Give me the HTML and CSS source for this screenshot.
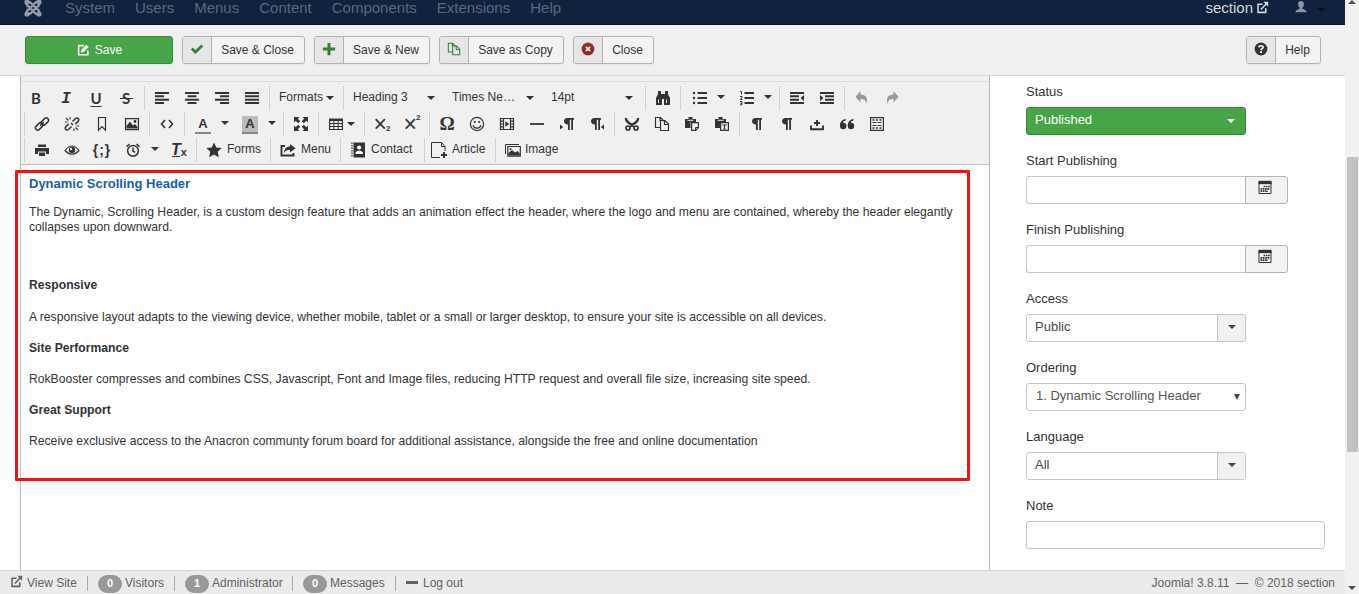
FILE: index.html
```html
<!DOCTYPE html>
<html lang="en">
<head>
<meta charset="utf-8">
<title>Edit module</title>
<link rel="stylesheet" href="styles.css">
</head>
<body>
<svg class="sprite" aria-hidden="true">
  <symbol id="joomla" viewBox="0 0 18 18"><g fill="none" stroke="currentColor" stroke-width="2.300"><path d="M3 3.500Q5.500 2 7.500 4.500L13.500 10.800M15 3.500Q12.500 2 10.500 4.500L4.500 10.800M3 14.500Q5.500 16 7.500 13.500L13.500 7.200M15 14.500Q12.500 16 10.500 13.500L4.500 7.200M3 3.500Q2 6 4.500 7.800M15 3.500Q16 6 13.500 7.800M3 14.500Q2 12 4.500 10.200M15 14.500Q16 12 13.500 10.200"/></g><g fill="currentColor"><circle cx="3" cy="3" r="2.600"/><circle cx="15" cy="3" r="2.600"/><circle cx="3" cy="15" r="2.600"/><circle cx="15" cy="15" r="2.600"/></g></symbol>
  <symbol id="edit" viewBox="0 0 16 16"><path d="M9 3H3v10.500h10.500V8.500" fill="none" stroke="currentColor" stroke-width="1.800"/><path d="M5.500 11l.8-3.200L12 2l2.500 2.500-5.800 5.700z" fill="currentColor"/></symbol>
  <symbol id="check" viewBox="0 0 16 16"><path d="M2 7.500l4.200 4L14 4" fill="none" stroke="currentColor" stroke-width="3.200"/></symbol>
  <symbol id="plus" viewBox="0 0 16 16"><path d="M8 1v14M1 8h14" stroke="currentColor" stroke-width="3.400"/></symbol>
  <symbol id="copy" viewBox="0 0 16 16"><path d="M6.500 11.500h-5v-10h5l2.500 2.500v1.500M6 1.500v3H9M6.500 4.500h4.500l3.500 3.500v6.500h-8zM10.500 4.500v4h4" fill="none" stroke="currentColor" stroke-width="1.200"/></symbol>
  <symbol id="cancel" viewBox="0 0 16 16"><circle cx="8" cy="8" r="7.300" fill="currentColor"/><path d="M5.500 5.500l5 5M10.500 5.500l-5 5" stroke="#fff" stroke-width="1.900"/></symbol>
  <symbol id="question" viewBox="0 0 16 16"><circle cx="8" cy="8" r="7.300" fill="currentColor"/><path d="M5.600 6.200C5.800 3.600 10.500 3.700 10.400 6.200 10.300 7.700 8.100 7.700 8.100 9.300" fill="none" stroke="#fff" stroke-width="1.800"/><path d="M7 10.700h2.200v2H7z" fill="#fff"/></symbol>
  <symbol id="external" viewBox="0 0 16 16"><path d="M8 4H2.500v10H12V9M6 10.500l7-7.500" fill="none" stroke="currentColor" stroke-width="1.900"/><path d="M9 1h6v6z" fill="currentColor"/></symbol>
  <symbol id="user" viewBox="0 0 16 16"><path d="M8 1c2.400 0 3.500 1.700 3.300 4C11.200 7 10.300 8 9.600 8.600V10c2 .6 4.400 1.500 4.900 4H1.500C2 11.500 4.400 10.600 6.400 10V8.600C5.700 8 4.800 7 4.700 5 4.500 2.700 5.600 1 8 1z" fill="currentColor"/></symbol>
  <symbol id="left" viewBox="0 0 16 16"><path d="M1 3h14M1 6.300h9M1 9.700h14M1 13h9" stroke="currentColor" stroke-width="1.900"/></symbol>
  <symbol id="center" viewBox="0 0 16 16"><path d="M1 3h14M3.500 6.300h9M1 9.700h14M3.500 13h9" stroke="currentColor" stroke-width="1.900"/></symbol>
  <symbol id="right" viewBox="0 0 16 16"><path d="M1 3h14M6 6.300h9M1 9.700h14M6 13h9" stroke="currentColor" stroke-width="1.900"/></symbol>
  <symbol id="justify" viewBox="0 0 16 16"><path d="M1 3h14M1 6.300h14M1 9.700h14M1 13h14" stroke="currentColor" stroke-width="1.900"/></symbol>
  <symbol id="find" viewBox="0 0 16 16"><path d="M3 1h3v3h4V1h3v3l2 4v7H9V9H7v6H1V8l2-4z" fill="currentColor"/><path d="M3 9.500h1V13H3zM11 9.500h1V13h-1z" fill="#eee"/></symbol>
  <symbol id="bullets" viewBox="0 0 16 16"><path d="M5.500 3H15M5.500 8H15M5.500 13H15" stroke="currentColor" stroke-width="1.800"/><circle cx="2" cy="3" r="1.200" fill="currentColor"/><circle cx="2" cy="8" r="1.200" fill="currentColor"/><circle cx="2" cy="13" r="1.200" fill="currentColor"/></symbol>
  <symbol id="numbers" viewBox="0 0 16 16"><path d="M5.500 3H15M5.500 8H15M5.500 13H15" stroke="currentColor" stroke-width="1.800"/><path d="M1 1.500h1.500v3M1 6.500h2V8L1.200 9.500H3.300M1 11.500h2v3.300H1M1.500 13.200H3" fill="none" stroke="currentColor"/></symbol>
  <symbol id="outdent" viewBox="0 0 16 16"><path d="M1 3h14M1 6.300h9M1 9.700h9M1 13h14" stroke="currentColor" stroke-width="1.900"/><path d="M15 5v6l-3.500-3z" fill="currentColor"/></symbol>
  <symbol id="indent" viewBox="0 0 16 16"><path d="M1 3h14M6 6.300h9M6 9.700h9M1 13h14" stroke="currentColor" stroke-width="1.900"/><path d="M1 5v6l3.500-3z" fill="currentColor"/></symbol>
  <symbol id="undo" viewBox="0 0 16 16"><path d="M6.500 1v3.500C12 4.500 14.500 8 12 14.500c0-4.500-1.500-5.500-5.500-5.500v3.500L1.500 6.800z" fill="currentColor"/></symbol>
  <symbol id="redo" viewBox="0 0 16 16"><path d="M9.500 1v3.500C4 4.500 1.500 8 4 14.500c0-4.500 1.500-5.500 5.500-5.500v3.500l5-5.700z" fill="currentColor"/></symbol>
  <symbol id="link" viewBox="0 0 16 16"><g fill="none" stroke="currentColor" stroke-width="1.500"><rect x="6.600" y="3.300" width="8.500" height="4.600" rx="2.300" transform="rotate(-45 10.850 5.600)"/><rect x=".9" y="8.100" width="8.500" height="4.600" rx="2.300" transform="rotate(-45 5.150 10.400)"/><path d="M6.200 9.800l3.600-3.600"/></g></symbol>
  <symbol id="unlink" viewBox="0 0 16 16"><g fill="none" stroke="currentColor" stroke-width="1.500"><path d="M8.500 5.500l3-3c2-1.500 4.200.7 2.700 2.700l-3 3M7.500 10.500l-3 3c-2 1.500-4.200-.7-2.700-2.700l3-3M7 7l2 2"/></g><path d="M2 2l2.500 2.500M6 1v2.500M1 6h2.500M11.500 11.500L14 14M10 12.500V15M12.500 10H15" stroke="currentColor" stroke-width="1.100"/></symbol>
  <symbol id="bookmark" viewBox="0 0 16 16"><path d="M4.500 1.500h7v12.700L8 10.500l-3.500 3.700z" fill="none" stroke="currentColor" stroke-width="1.200"/></symbol>
  <symbol id="picture" viewBox="0 0 16 16"><path d="M1.600 2.600h12.800v11H1.600z" fill="none" stroke="currentColor" stroke-width="1.300"/><path d="M2.500 12.500V10L6 5.500l3 4L11 8l2.500 3v1.500z" fill="currentColor"/><circle cx="11" cy="5.500" r="1.400" fill="currentColor"/></symbol>
  <symbol id="code" viewBox="0 0 16 16"><path d="M6 4L2.500 8 6 12M10 4l3.500 4L10 12" fill="none" stroke="currentColor" stroke-width="1.600"/></symbol>
  <symbol id="fullscreen" viewBox="0 0 16 16"><path d="M1 1h5.500L4.800 2.700l2.500 2.500-2.100 2.100-2.500-2.500L1 6.500zM15 1H9.500l1.700 1.700-2.500 2.500 2.100 2.100 2.500-2.500L15 6.500zM1 15h5.500l-1.700-1.700 2.500-2.500-2.100-2.100-2.500 2.500L1 9.500zM15 15H9.500l1.700-1.700-2.500-2.500 2.100-2.100 2.500 2.500L15 9.500z" fill="currentColor"/></symbol>
  <symbol id="table" viewBox="0 0 16 16"><path d="M1 2.500h14v11.500H1z" fill="currentColor"/><path d="M2.200 5h3.200v2H2.200zM6.400 5h3.200v2H6.400zM10.600 5h3.200v2h-3.200zM2.200 8h3.200v2H2.200zM6.400 8h3.200v2H6.400zM10.600 8h3.200v2h-3.200zM2.200 11h3.200v2H2.200zM6.400 11h3.200v2H6.400zM10.600 11h3.200v2h-3.200z" fill="#f0f0f0"/></symbol>
  <symbol id="smile" viewBox="0 0 16 16"><circle cx="8" cy="8" r="6.600" fill="none" stroke="currentColor" stroke-width="1.200"/><circle cx="5.800" cy="6" r="1.100" fill="currentColor"/><circle cx="10.200" cy="6" r="1.100" fill="currentColor"/><path d="M4 9.200c1.600 4 6.400 4 8 0" fill="none" stroke="currentColor" stroke-width="1.200"/></symbol>
  <symbol id="media" viewBox="0 0 16 16"><path d="M1.500 2.500h13v11h-13zM4.500 2.500v11M11.500 2.500v11M1.500 5.200h3M1.500 8h3M1.500 10.800h3M11.500 5.200h3M11.500 8h3M11.500 10.800h3" fill="none" stroke="currentColor" stroke-width="1.200"/><path d="M6.300 5.200l4 2.800-4 2.800z" fill="currentColor"/></symbol>
  <symbol id="hr" viewBox="0 0 16 16"><path d="M1 8h14" stroke="currentColor" stroke-width="1.800"/></symbol>
  <symbol id="para" viewBox="0 0 16 16"><path d="M6.500 2H13v1.700h-1V14h-1.800V3.700H8.800V14H7V8.500C1.700 8.500 1.900 2 6.500 2z" fill="currentColor"/></symbol>
  <symbol id="ltr" viewBox="0 0 16 16"><path d="M8.500 2H15v1.700h-1V14h-1.800V3.700h-1.400V14H9V8.500C3.700 8.500 3.900 2 8.500 2zM1 8.500v5L4.200 11z" fill="currentColor"/></symbol>
  <symbol id="rtl" viewBox="0 0 16 16"><path d="M5.500 2H12v1.700h-1V14H9.200V3.700H7.800V14H6V8.500C.7 8.500.9 2 5.500 2zM15 8.500v5L11.800 11z" fill="currentColor"/></symbol>
  <symbol id="cut" viewBox="0 0 16 16"><path d="M2 2c-.5 2 1 3.500 3 5l6 4M14 2c.5 2-1 3.500-3 5l-6 4" fill="none" stroke="currentColor" stroke-width="2.300"/><g fill="none" stroke="currentColor" stroke-width="1.700"><circle cx="4" cy="12" r="2"/><circle cx="12" cy="12" r="2"/></g></symbol>
  <symbol id="paste" viewBox="0 0 16 16"><path d="M1 3h3.500V1h4v2H12v3H6.500v6H1z" fill="currentColor"/><path d="M3.500 4.300h6" stroke="#eee"/><path d="M7.600 6.600h6.800v5l-2.700 2.800H7.600z" fill="#f0f0f0" stroke="currentColor" stroke-width="1.200"/><path d="M11.500 14.500v-3h3" fill="none" stroke="currentColor"/></symbol>
  <symbol id="pastetext" viewBox="0 0 16 16"><path d="M1 3h3.500V1h4v2H12v3H6.500v6H1z" fill="currentColor"/><path d="M3.500 4.300h6" stroke="#eee"/><path d="M6.600 6.600h7.800v7.800H6.600z" fill="#f0f0f0" stroke="currentColor" stroke-width="1.200"/><path d="M8.200 9h4.600M10.500 9v4M9.300 13h2.400" fill="none" stroke="currentColor" stroke-width="1.200"/></symbol>
  <symbol id="insert" viewBox="0 0 16 16"><path d="M2 9.500v3.700h12V9.500" fill="none" stroke="currentColor" stroke-width="1.900"/><path d="M8 4v6M5 7h6" stroke="currentColor" stroke-width="1.900"/></symbol>
  <symbol id="quote" viewBox="0 0 16 16"><g fill="currentColor"><circle cx="4.200" cy="10" r="3.200"/><circle cx="12" cy="10" r="3.200"/><path d="M1 10C.8 6 3 3.500 6.700 3v1.500C4.500 5 3.700 6 3.700 8zM8.800 10c-.2-4 2-6.500 5.700-7v1.500c-2.200.5-3 1.500-3 3.500z"/></g></symbol>
  <symbol id="pagebreak" viewBox="0 0 16 16"><path d="M1.600 1.600h12.800v12.800H1.600z" fill="none" stroke="currentColor" stroke-width="1.200"/><path d="M3.500 4h9M3.500 12h9" stroke="currentColor" stroke-width="1.300" stroke-dasharray="2 1.500"/><path d="M3.500 6.500h9M3.500 9.500h9" stroke="currentColor" stroke-width="1.200" stroke-dasharray="4 1"/></symbol>
  <symbol id="print" viewBox="0 0 16 16"><path d="M4 2.500h8V5H4zM1 6h14v6h-3V9.500H4V12H1z" fill="currentColor"/><path d="M5 10.500h6V14H5z" fill="currentColor"/></symbol>
  <symbol id="eye" viewBox="0 0 16 16"><path d="M1 8.500Q8-.5 15 8.500Q8 16 1 8.500z" fill="none" stroke="currentColor" stroke-width="1.200"/><circle cx="8" cy="8" r="3.200" fill="currentColor"/><circle cx="7" cy="7" r="1.200" fill="#fff"/></symbol>
  <symbol id="clock" viewBox="0 0 16 16"><circle cx="8" cy="8.800" r="5.400" fill="none" stroke="currentColor" stroke-width="1.500"/><path d="M8 5.500V9l2.200 1.300M1.500 4.800l3-2.800M14.500 4.800l-3-2.800" fill="none" stroke="currentColor" stroke-width="1.500"/></symbol>
  <symbol id="star" viewBox="0 0 16 16"><path d="M8 .5l2.300 5 5.400.6-4 3.700 1.100 5.400L8 12.500l-4.800 2.700 1.100-5.400-4-3.700 5.400-.6z" fill="currentColor"/></symbol>
  <symbol id="share" viewBox="0 0 16 16"><path d="M5 4H1.500v9.500h12V11" fill="none" stroke="currentColor" stroke-width="1.900"/><path d="M10 2l5.500 4.300L10 10.500V8C7 8 5.500 8.500 4 11c0-4 2-6.500 6-6.500z" fill="currentColor"/></symbol>
  <symbol id="contact" viewBox="0 0 16 16"><path d="M3.500.5H15v15H3.500z" fill="currentColor"/><path d="M2 .5v15" stroke="currentColor" stroke-width="1.300" stroke-dasharray="1.500 1"/><circle cx="9.200" cy="5.500" r="2.100" fill="#fff"/><path d="M5.500 12V10.500q1.500-2 3.700-2t3.700 2V12z" fill="#fff"/></symbol>
  <symbol id="article" viewBox="0 0 16 16"><path d="M9 15.500H.5V.5h10L14 4.500V9M10.500.5v4H14" fill="none" stroke="currentColor"/><path d="M13 10v6M10 13h6" stroke="currentColor" stroke-width="1.900"/></symbol>
  <symbol id="images" viewBox="0 0 16 16"><path d="M.5 12V2.500H14" fill="none" stroke="currentColor"/><path d="M2.800 4.500h12.500v9.700H2.800z" fill="none" stroke="currentColor" stroke-width="1.200"/><path d="M3.500 13.500V11L7 8l3 2.500L12.500 9l2.300 2.500v2z" fill="currentColor"/><circle cx="5.500" cy="7" r="1" fill="currentColor"/></symbol>
  <symbol id="calendar" viewBox="0 0 14 14"><path d="M1 2h12v11.500H1z" fill="#f8f8f8" stroke="currentColor"/><path d="M.5.800h13v3.400H.5z" fill="currentColor"/><path d="M5.500 6.500H12M2.500 8.800H12M2.500 11.200H10" stroke="currentColor" stroke-width="1.700" stroke-dasharray="1.700 .6"/></symbol>
</svg>

<div class="app">
<div class="page">
  <nav class="navbar">
    <svg class="logo"><use href="#joomla"/></svg>
    <div class="menu"><span>System</span><span>Users</span><span>Menus</span><span>Content</span><span>Components</span><span>Extensions</span><span>Help</span></div>
    <div class="site">section <svg class="i12"><use href="#external"/></svg></div>
    <svg class="person"><use href="#user"/></svg><i class="caret dark"></i>
  </nav>

  <header class="actions">
    <button class="btn save"><svg class="i14"><use href="#edit"/></svg>Save</button>
    <button class="btn w123"><span class="ico green"><svg class="i14"><use href="#check"/></svg></span><span class="txt">Save &amp; Close</span></button>
    <button class="btn w116"><span class="ico green"><svg class="i14"><use href="#plus"/></svg></span><span class="txt">Save &amp; New</span></button>
    <button class="btn w125"><span class="ico green"><svg class="i14"><use href="#copy"/></svg></span><span class="txt">Save as Copy</span></button>
    <button class="btn w81"><span class="ico red"><svg class="i14"><use href="#cancel"/></svg></span><span class="txt">Close</span></button>
    <button class="btn w75 help"><span class="ico"><svg class="i14"><use href="#question"/></svg></span><span class="txt">Help</span></button>
  </header>

  <main class="main">
    <section class="editor">
      <div class="tools">
        <div class="row first">
          <div class="group"><b class="t letter">B</b><i class="t letter italic">I</i><b class="t letter under">U</b><b class="t letter strike">S</b></div>
          <div class="group"><span class="t"><svg><use href="#left"/></svg></span><span class="t"><svg><use href="#center"/></svg></span><span class="t"><svg><use href="#right"/></svg></span><span class="t"><svg><use href="#justify"/></svg></span></div>
          <div class="group"><span class="formats">Formats<i class="caret"></i></span></div>
          <div class="group"><span class="pick">Heading 3<i class="caret"></i></span><span class="pick">Times Ne…<i class="caret"></i></span><span class="pick">14pt<i class="caret"></i></span></div>
          <div class="group"><span class="t"><svg><use href="#find"/></svg></span></div>
          <div class="group"><span class="split"><svg><use href="#bullets"/></svg><i class="caret"></i></span><span class="split"><svg><use href="#numbers"/></svg><i class="caret"></i></span></div>
          <div class="group"><span class="t"><svg><use href="#outdent"/></svg></span><span class="t"><svg><use href="#indent"/></svg></span></div>
          <div class="group faded"><span class="t"><svg><use href="#undo"/></svg></span><span class="t"><svg><use href="#redo"/></svg></span></div>
        </div>
        <div class="row">
          <div class="group"><span class="t"><svg><use href="#link"/></svg></span><span class="t"><svg><use href="#unlink"/></svg></span><span class="t"><svg><use href="#bookmark"/></svg></span><span class="t"><svg><use href="#picture"/></svg></span></div>
          <div class="group"><span class="t"><svg><use href="#code"/></svg></span></div>
          <div class="group"><span class="split"><b class="swatch">A</b><i class="caret"></i></span><span class="split"><b class="swatch filled">A</b><i class="caret"></i></span></div>
          <div class="group"><span class="t"><svg><use href="#fullscreen"/></svg></span></div>
          <div class="group"><span class="tablebtn"><svg><use href="#table"/></svg><i class="caret"></i></span></div>
          <div class="group"><span class="t script">×<small class="low">2</small></span><span class="t script">×<small class="high">2</small></span></div>
          <div class="group"><span class="t omega">Ω</span><span class="t"><svg><use href="#smile"/></svg></span><span class="t"><svg><use href="#media"/></svg></span><span class="t"><svg><use href="#hr"/></svg></span><span class="t"><svg><use href="#ltr"/></svg></span><span class="t"><svg><use href="#rtl"/></svg></span></div>
          <div class="group"><span class="t"><svg><use href="#cut"/></svg></span><span class="t"><svg><use href="#copy"/></svg></span><span class="t"><svg><use href="#paste"/></svg></span><span class="t"><svg><use href="#pastetext"/></svg></span></div>
          <div class="group"><span class="t"><svg><use href="#para"/></svg></span><span class="t"><svg><use href="#para"/></svg></span><span class="t"><svg><use href="#insert"/></svg></span><span class="t"><svg><use href="#quote"/></svg></span><span class="t"><svg><use href="#pagebreak"/></svg></span></div>
        </div>
        <div class="row">
          <div class="group"><span class="t"><svg><use href="#print"/></svg></span><span class="t"><svg><use href="#eye"/></svg></span><b class="t braces">{;}</b><span class="split clockbtn"><svg><use href="#clock"/></svg><i class="caret"></i></span><b class="t clear"><i>T</i><small>x</small></b></div>
          <div class="group"><span class="named w69"><svg><use href="#star"/></svg>Forms</span></div>
          <div class="group"><span class="named w65"><svg><use href="#share"/></svg>Menu</span></div>
          <div class="group"><span class="named w79"><svg><use href="#contact"/></svg>Contact</span></div>
          <div class="group"><span class="named w66 article"><svg><use href="#article"/></svg>Article</span></div>
          <div class="group"><span class="named w66 image"><svg><use href="#images"/></svg>Image</span></div>
        </div>
      </div>
      <article class="content">
        <h3>Dynamic Scrolling Header</h3>
        <p class="intro">The Dynamic, Scrolling Header, is a custom design feature that adds an animation effect the header, where the logo and menu are contained, whereby the header elegantly collapses upon downward.</p>
        <h4>Responsive</h4>
        <p>A responsive layout adapts to the viewing device, whether mobile, tablet or a small or larger desktop, to ensure your site is accessible on all devices.</p>
        <h4>Site Performance</h4>
        <p>RokBooster compresses and combines CSS, Javascript, Font and Image files, reducing HTTP request and overall file size, increasing site speed.</p>
        <h4>Great Support</h4>
        <p>Receive exclusive access to the Anacron communty forum board for additional assistance, alongside the free and online documentation</p>
      </article>
      <div class="highlight"></div>
    </section>

    <aside class="side">
      <div class="field"><label>Status</label><div class="select published">Published<i class="caret"></i></div></div>
      <div class="field"><label>Start Publishing</label><div class="date"><span class="input"></span><span class="cal"><svg><use href="#calendar"/></svg></span></div></div>
      <div class="field"><label>Finish Publishing</label><div class="date"><span class="input"></span><span class="cal"><svg><use href="#calendar"/></svg></span></div></div>
      <div class="field"><label>Access</label><div class="select">Public<span class="drop"><i class="caret"></i></span></div></div>
      <div class="field"><label>Ordering</label><div class="select native">1. Dynamic Scrolling Header<i class="arrow"></i></div></div>
      <div class="field"><label>Language</label><div class="select">All<span class="drop"><i class="caret"></i></span></div></div>
      <div class="field"><label>Note</label><div class="note"></div></div>
    </aside>
  </main>

  <footer class="status">
    <div class="item site-link"><svg class="i12"><use href="#external"/></svg>View Site</div>
    <div class="item w87"><span class="badge">0</span>Visitors</div>
    <div class="item w118"><span class="badge">1</span>Administrator</div>
    <div class="item w103"><span class="badge">0</span>Messages</div>
    <div class="item"><span class="minus"></span>Log out</div>
    <div class="copyright">Joomla! 3.8.11 &nbsp;—&nbsp; © 2018 section</div>
  </footer>
</div>
<div class="scrollbar"><i class="up"></i><div class="thumb"></div><i class="down"></i></div>
</div>
</body>
</html>
```

FILE: styles.css
```css
* { box-sizing: border-box; }
body { margin: 0; font: 13px/18px "Liberation Sans", Arial, sans-serif; color: #333; background: #fff; overflow: hidden; }
svg { display: block; width: 16px; height: 16px; flex: none; }
.sprite { position: absolute; width: 0; height: 0; }
.app { display: flex; width: 1359px; height: 594px; }
.page { display: flex; flex-direction: column; width: 1345px; }
.i14 { width: 14px; height: 14px; }
.i12 { width: 13px; height: 13px; }
.caret { display: block; flex: none; width: 0; height: 0; border: 4px solid transparent; border-top-color: currentColor; border-bottom: 0; }

/* top navigation */
.navbar { display: flex; height: 25px; background: #10223e; border-bottom: 1px solid #0a1327; color: #5b6880; font-size: 15px; line-height: 16px; padding-left: 24px; }
.logo { width: 18px; height: 18px; margin: -1px 23px 0 0; color: #929baa; }
.menu { display: flex; gap: 20px; flex: 1; }
.site { display: flex; gap: 3px; color: #d5d9df; }
.site svg { margin-top: 1px; }
.person { width: 14px; height: 14px; margin: 0 9px 0 25px; color: #8b94a4; }
.dark { color: #060d19; margin: 8px 20px 0 0; }

/* action buttons */
.actions { display: flex; height: 51px; padding: 11px 24px 0 25px; background: #f0f0f0; border-bottom: 1px solid #d6d6d6; }
.btn { display: flex; padding: 0; margin-right: 9px; height: 28px; border: 1px solid #b3b3b3; border-radius: 3px; background: #f3f3f3; color: #333; font: 12px/26px "Liberation Sans", Arial, sans-serif; box-shadow: 0 1px 2px rgba(0,0,0,.05); overflow: hidden; }
.save { width: 148px; justify-content: center; align-items: center; gap: 5px; background: #46a546; border-color: #3b8b3d; color: #fff; }
.save svg { margin-top: -1px; }
.ico { width: 29px; height: 26px; padding: 5px 0 0 7px; background: #e6e6e6; border-right: 1px solid #b3b3b3; }
.green { color: #378137; }
.red { color: #942a25; }
.txt { flex: 1; text-align: center; padding-right: 1px; }
.w123 { width: 123px; }
.w116 { width: 116px; }
.w125 { width: 125px; }
.w81 { width: 81px; }
.w75 { width: 75px; }
.help { margin: 0 0 0 auto; }

/* editor */
.main { display: flex; height: 494px; }
.editor { position: relative; width: 970px; margin-left: 20px; border: solid #bbb; border-width: 0 1px; }
.tools { height: 89px; padding-top: 9px; background: linear-gradient(#f0f0f0 5px, #ddd 5px, #ddd 6px, #f0f0f0 6px); border-bottom: 1px solid #c5c5c5; font-size: 12px; }
.row { display: flex; height: 26px; padding-left: 3px; }
.row.first { padding-left: 0; }
.group { display: flex; height: 24px; margin-top: 1px; padding: 0 2px; border-left: 1px solid #d2d2d2; }
.first .group:first-child { width: 123px; border-left: 0; padding-left: 0; }
.t { display: flex; align-items: center; justify-content: center; width: 30px; height: 24px; }
.letter { font: bold 15px/22px Lato, sans-serif; padding-bottom: 1px; }
.italic { font: italic bold 16px/22px "Liberation Mono", monospace; padding-top: 3px; }
.under { text-decoration: underline; text-underline-offset: 2px; }
.strike { background: linear-gradient(currentColor, currentColor) 9px 12px / 13px 1px no-repeat; }
.formats, .pick, .split, .tablebtn, .named { display: flex; align-items: center; height: 24px; }
.formats { width: 69px; padding: 0 0 2px 7px; gap: 3px; }
.pick { width: 99px; padding: 0 10px 2px 7px; justify-content: space-between; }
.formats .caret, .pick .caret { margin-top: 1px; }
.split { width: 47px; padding-left: 9px; gap: 9px; }
.clockbtn { padding-left: 8px; gap: 10px; }
.split .caret { margin-top: -2px; }
.clockbtn .caret { margin-top: -3px; }
.faded { color: #999; }
.tablebtn { width: 41px; padding-left: 7px; gap: 3px; }
.swatch { width: 16px; height: 18px; margin: 2px 0 0 -1px; border-bottom: 2px solid #888; font: bold 13px/16px "Liberation Sans", sans-serif; text-align: center; }
.swatch + .caret { margin-left: 1px; }
.filled { background: #bbb; }
.script { font-size: 23px; line-height: 18px; padding-bottom: 1px; }
.script small { font: bold 8px/8px "Liberation Sans", sans-serif; margin-left: -1px; }
.low { padding-top: 11px; }
.high { padding-bottom: 11px; }
.omega { font: bold 19px/20px "Liberation Serif", serif; }
.braces { font: bold 14px/20px "Liberation Sans", sans-serif; letter-spacing: 1px; padding-bottom: 1px; }
.clear { font: bold 16px/15px "Liberation Sans", sans-serif; padding-bottom: 2px; background: linear-gradient(currentColor, currentColor) 8px 18px / 8px 1px no-repeat; }
.clear small { font-size: 11px; padding-top: 6px; }
.named { padding: 0 0 2px 7px; gap: 5px; }
.named svg { margin-top: 2px; }
.w69 { width: 69px; }
.w65 { width: 65px; }
.w79 { width: 79px; }
.w66 { width: 66px; }
.article { padding-left: 4px; }
.image { gap: 4px; }

.content { padding: 11px 8px 0; font-size: 12.160px; line-height: 15px; }
.content h3 { margin: 0 0 14px; font-size: 13px; line-height: 15px; color: #1a5dab; }
.content h4 { margin: 0; font-size: 12.160px; line-height: 15px; }
.content p { margin: 17px 0 16px; }
.content h4 ~ h4 + p { margin-top: 16px; }
.content .intro { margin: 0 0 43px; width: 940px; }
.highlight { position: absolute; left: -6px; top: 94px; width: 955px; height: 311px; border: 3px solid #fb0d12; border-radius: 1px; }

/* module options */
.side { padding: 7px 0 0 36px; width: 335px; }
.field { height: 69px; }
label { display: block; height: 24px; }
.select { display: flex; width: 220px; height: 28px; border: 1px solid #c5c5c5; border-radius: 3px; padding-left: 8px; line-height: 24px; background: #fff; justify-content: space-between; color: #444; overflow: hidden; }
.published { background: #46a546; border-color: #3a843a; color: #fff; padding-right: 10px; }
.published .caret { margin-top: 11px; }
.drop { width: 28px; height: 26px; border-left: 1px solid #c5c5c5; background: #f1f1f1; padding: 10px 0 0 10px; }
.native { padding-left: 9px; color: #555; }
.arrow { width: 0; height: 0; margin: 10px 5px 0; border: 3px solid transparent; border-top: 6px solid #444; border-bottom: 0; }
.date { display: flex; width: 262px; height: 28px; }
.input { width: 219px; border: 1px solid #c8c8c8; border-right: 0; border-radius: 3px 0 0 3px; }
.cal { width: 43px; border: 1px solid #b3b3b3; border-radius: 0 3px 3px 0; background: #f2f2f2; padding: 3px 0 0 12px; }
.cal svg { width: 14px; height: 14px; }
.note { width: 299px; height: 28px; border: 1px solid #c5c5c5; border-radius: 3px; }

/* status bar */
.status { display: flex; align-items: flex-start; height: 24px; padding: 4px 10px 0; background: #ebebeb; border-top: 1px solid #d6d6d6; font-size: 12px; line-height: 16px; color: #626262; }
.item { display: flex; height: 16px; padding-left: 10px; background: linear-gradient(#aaa, #aaa) 0 1px / 1px 15px no-repeat; }
.site-link { width: 77px; padding: 0; gap: 4px; background: none; }
.site-link svg { margin-top: 0; }
.badge { width: 24px; height: 18px; margin: 0 3px 0 1px; border-radius: 9px; background: #999; color: #fff; font: bold 11px/16px "Liberation Sans", sans-serif; text-align: center; flex: none; }
.w87 { width: 87px; }
.w118 { width: 118px; }
.w103 { width: 103px; }
.minus { width: 12px; height: 3px; margin: 6px 5px 0 1px; background: #626262; }
.copyright { margin-left: auto; }

/* scrollbar */
.scrollbar { display: flex; flex-direction: column; width: 14px; background: #f1f1f1; align-items: center; }
.up { width: 0; height: 4px; border: 4px solid transparent; border-top: 0; border-bottom-color: #505050; }
.thumb { width: 11px; height: 295px; margin: 153px 0 134px 1px; background: #c1c1c1; }
.down { width: 0; height: 4px; border: 4px solid transparent; border-bottom: 0; border-top-color: #505050; }
```
